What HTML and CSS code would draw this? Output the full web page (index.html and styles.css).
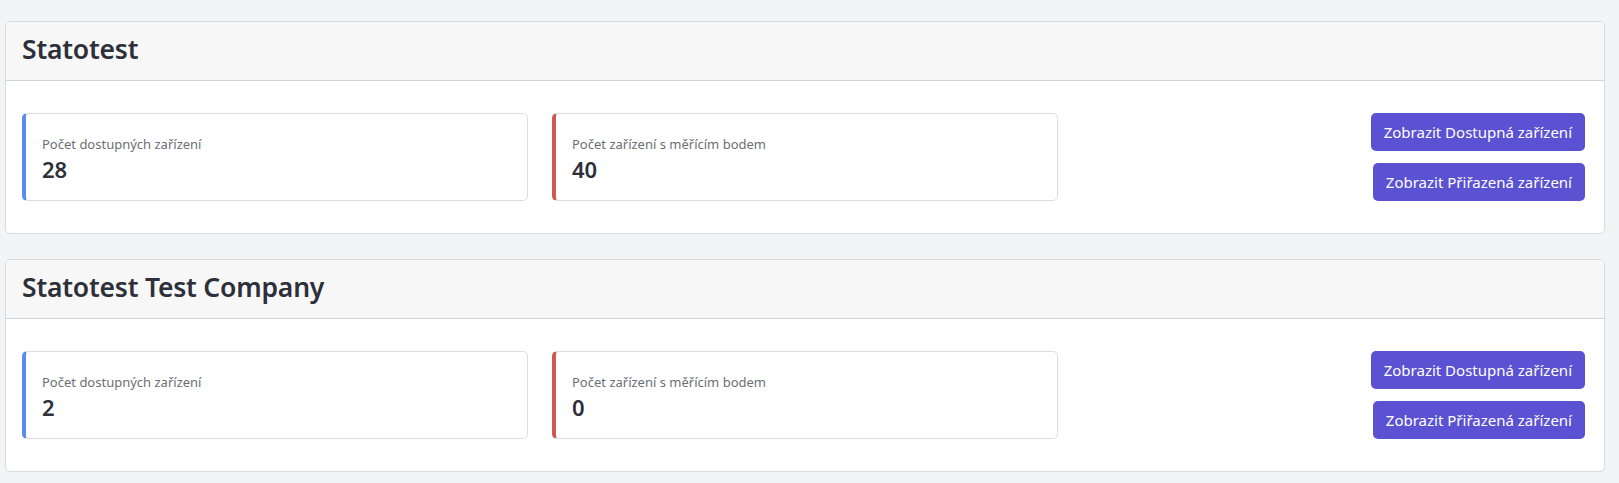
FILE: index.html
```html
<!DOCTYPE html>
<html lang="cs">
<head>
<meta charset="utf-8">
<link rel="stylesheet" href="styles.css">
</head>
<body>
<main class="page">
  <section class="panel">
    <header class="panel-head"><h2 class="panel-title">Statotest</h2></header>
    <div class="panel-body">
      <div class="stat stat-blue">
        <div class="stat-label">Počet dostupných zařízení</div>
        <div class="stat-value">28</div>
      </div>
      <div class="stat stat-red">
        <div class="stat-label">Počet zařízení s měřícím bodem</div>
        <div class="stat-value">40</div>
      </div>
      <div class="actions">
        <button class="btn">Zobrazit Dostupná zařízení</button>
        <button class="btn">Zobrazit Přiřazená zařízení</button>
      </div>
    </div>
  </section>
  <section class="panel">
    <header class="panel-head"><h2 class="panel-title">Statotest Test Company</h2></header>
    <div class="panel-body">
      <div class="stat stat-blue">
        <div class="stat-label">Počet dostupných zařízení</div>
        <div class="stat-value">2</div>
      </div>
      <div class="stat stat-red">
        <div class="stat-label">Počet zařízení s měřícím bodem</div>
        <div class="stat-value">0</div>
      </div>
      <div class="actions">
        <button class="btn">Zobrazit Dostupná zařízení</button>
        <button class="btn">Zobrazit Přiřazená zařízení</button>
      </div>
    </div>
  </section>
</main>
</body>
</html>
```
FILE: styles.css
```css
* { box-sizing: border-box; }
html, body { margin: 0; padding: 0; }
body {
  background: #f3f4f6;
  font-family: "Noto Sans", "Open Sans", "Liberation Sans", sans-serif;
  color: #2d3039;
}
.page {
  padding: 21px 14px 10px 5px;
  display: flex;
  flex-direction: column;
  gap: 25px;
}
.panel {
  background: #fff;
  border: 1px solid #d9dadd;
  border-radius: 5px;
  overflow: hidden;
}
.panel-head {
  background: #f7f7f8;
  border-bottom: 1px solid #d4d5d8;
  height: 59px;
  display: flex;
  align-items: center;
  padding: 0 16px 4px;
}
.panel-title {
  margin: 0;
  font-size: 26.5px;
  font-weight: 600;
  letter-spacing: -0.2px;
  color: #2d3039;
}
.panel-body {
  display: flex;
  align-items: flex-start;
  padding: 32px 19px 32px 16px;
}
.stat {
  width: 506px;
  height: 88px;
  border: 1px solid #dcdde0;
  border-radius: 5px;
  padding: 21px 16px 0 16px;
  margin-right: 24px;
}
.stat-blue { border-left: 4px solid #5b8def; }
.stat-red { border-left: 4px solid #cd5b50; }
.stat-label {
  font-size: 13px;
  color: #6c6f75;
  line-height: 18px;
}
.stat-value {
  font-size: 22px;
  font-weight: 600;
  line-height: 32px;
  color: #2d3039;
}
.actions {
  margin-left: auto;
  display: flex;
  flex-direction: column;
  align-items: flex-end;
  gap: 12px;
}
.btn {
  background: #5a51d3;
  color: #fff;
  border: none;
  border-radius: 5px;
  height: 38px;
  padding: 0 13px;
  font-family: inherit;
  font-size: 15px;
  cursor: pointer;
}
```
